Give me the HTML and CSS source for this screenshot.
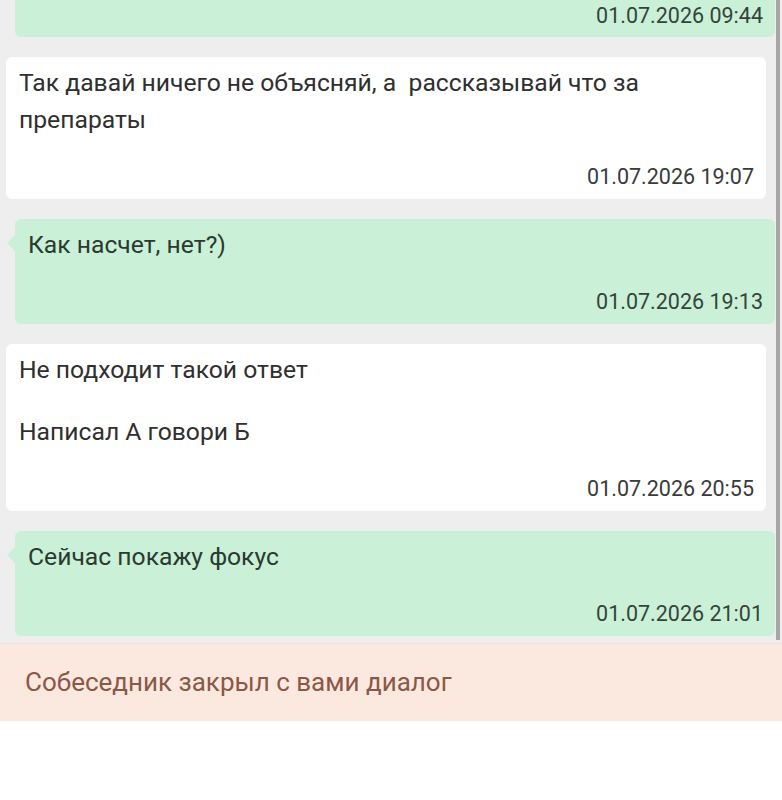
FILE: index.html
```html
<!DOCTYPE html>
<html lang="ru">
<head>
<meta charset="utf-8">
<title>Диалог</title>
<link rel="stylesheet" href="styles.css">
</head>
<body>
<div class="chat">
  <div class="messages">
    <div class="bubble mine cut">
      <div class="time">01.07.2026 09:44</div>
    </div>
    <div class="bubble theirs">
      <div class="text">Так давай ничего не объясняй, а&nbsp; рассказывай что за препараты</div>
      <div class="time">01.07.2026 19:07</div>
    </div>
    <div class="bubble mine">
      <div class="text">Как насчет, нет?)</div>
      <div class="time">01.07.2026 19:13</div>
    </div>
    <div class="bubble theirs">
      <div class="text">Не подходит такой ответ</div>
      <div class="text para">Написал А говори Б</div>
      <div class="time">01.07.2026 20:55</div>
    </div>
    <div class="bubble mine">
      <div class="text">Сейчас покажу фокус</div>
      <div class="time">01.07.2026 21:01</div>
    </div>
  </div>
  <div class="scrollbar"></div>
</div>
<div class="closed">Собеседник закрыл с вами диалог</div>
</body>
</html>
```
FILE: styles.css
```css
html, body {
  margin: 0;
  padding: 0;
  background: #ffffff;
  font-family: Roboto, "Noto Sans", "Liberation Sans", sans-serif;
}
.chat {
  display: flex;
  background: #eeeeee;
  height: 643px;
  overflow: hidden;
}
.messages {
  width: 776px;
  display: flex;
  flex-direction: column;
  gap: 20px;
}
.scrollbar {
  width: 4px;
  height: 640px;
  background: #a6a6a6;
}
.bubble {
  position: relative;
  border-radius: 6px;
  padding: 7px 12px 10px 13px;
}
.bubble.mine {
  background: #caf0d8;
  color: #2a3a30;
  margin: 0 1px 0 15px;
}
.bubble.theirs {
  background: #ffffff;
  color: #2f2f2f;
  margin: 0 10px 0 6px;
}
.bubble.mine:not(.cut)::before {
  content: "";
  position: absolute;
  left: -8px;
  top: 16px;
  border-style: solid;
  border-width: 8px 8px 8px 0;
  border-color: transparent #caf0d8 transparent transparent;
}
.bubble.cut {
  border-top-left-radius: 0;
  border-top-right-radius: 0;
  padding-top: 4px;
  padding-bottom: 9px;
}
.text {
  font-size: 24.7px;
  line-height: 37px;
}
.text.para {
  margin-top: 25px;
}
.time {
  font-size: 21.5px;
  line-height: 24px;
  text-align: right;
  margin-top: 27px;
}
.cut .time {
  margin-top: 0;
}
.mine .time {
  color: #34443a;
}
.theirs .time {
  color: #3a3a3a;
}
.closed {
  background: #fbe8df;
  color: #8b5848;
  font-size: 26px;
  line-height: 77px;
  height: 77px;
  padding-left: 25px;
  border-top: 1px solid #efe0d8;
}
```
